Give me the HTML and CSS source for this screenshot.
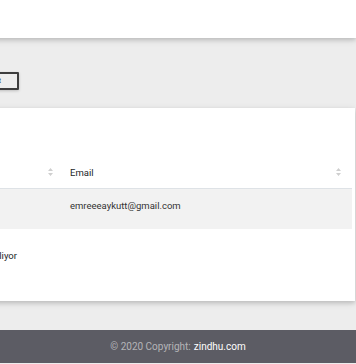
FILE: index.html
```html
<!DOCTYPE html>
<html lang="tr">
<head>
  <meta charset="UTF-8" />
  <meta name="viewport" content="width=device-width, initial-scale=1" />
  <title>Kullanıcılar</title>
  <link rel="stylesheet" href="styles.css">
</head>
<body>
  <div class="page">
    <div class="top-card"></div>

    <div class="toolbar">
      <button class="btn-outline">FİLTRELER</button>
    </div>

    <div class="card">
      <table class="data-table">
        <thead>
          <tr>
            <th class="col-name">Ad Soyad
              <svg class="sort" width="5" height="8" viewBox="0 0 5 8"><path d="M2.5 0L5 3H0z M2.5 8L0 5h5z" fill="#cfcfcf"/></svg>
            </th>
            <th class="col-mail">Email
              <svg class="sort" width="5" height="8" viewBox="0 0 5 8"><path d="M2.5 0L5 3H0z M2.5 8L0 5h5z" fill="#cfcfcf"/></svg>
            </th>
          </tr>
        </thead>
        <tbody>
          <tr class="striped">
            <td>Emre Aykut</td>
            <td>emreeeaykutt@gmail.com</td>
          </tr>
        </tbody>
      </table>
      <div class="info">1 kayıttan 1 - 1 arası gösteriliyor</div>
    </div>

    <div class="gap"></div>
  </div>

  <footer class="footer">
    © 2020 Copyright: <a href="#">zindhu.com</a>
  </footer>
</body>
</html>
```

FILE: styles.css
```css
body {
  margin: 0;
  background: #ededed;
  font-family: Roboto, "Liberation Sans", sans-serif;
  color: #212529;
  overflow: hidden;
}
.page {
  margin-left: -200px;
  width: 556px;
}
.top-card {
  height: 38px;
  background: #fff;
  box-shadow: 0 2px 4px 0 rgba(0,0,0,.14), 0 2px 8px 0 rgba(0,0,0,.1);
}
.toolbar {
  height: 70px;
  width: 219px;
  display: flex;
  justify-content: flex-end;
  align-items: flex-start;
  padding-top: 34px;
  box-sizing: border-box;
}
.btn-outline {
  height: 18px;
  padding: 0 16px 0 10px;
  border: 2px solid #3d3d3d;
  border-radius: 1px;
  background: transparent;
  color: #555;
  font-family: Roboto, sans-serif;
  font-size: 7px;
  font-weight: 700;
  box-shadow: 0 1px 3px rgba(0,0,0,.2);
}
.card {
  width: 555px;
  height: 193px;
  background: #fff;
  box-shadow: 0 2px 4px 0 rgba(0,0,0,.14), 0 2px 8px 0 rgba(0,0,0,.1);
  padding-top: 45px;
  box-sizing: border-box;
}
.data-table {
  width: 552px;
  border-collapse: collapse;
  table-layout: fixed;
  font-size: 9.5px;
}
.col-name {
  width: 258px;
}
.data-table th {
  position: relative;
  text-align: left;
  font-weight: 400;
  height: 35px;
  padding: 4px 12px 0;
  box-sizing: border-box;
  border-bottom: 1px solid #dee2e6;
}
.data-table td {
  height: 41px;
  padding: 0 12px 6px;
  box-sizing: border-box;
  color: #333;
}
.sort {
  position: absolute;
  right: 5px;
  top: 15px;
}
.col-mail .sort {
  right: 11px;
}
.striped {
  background: #f2f2f2;
}
.info {
  width: 217px;
  text-align: right;
  font-size: 9.5px;
  margin-top: 21px;
}
.gap {
  height: 29px;
}
.footer {
  height: 33px;
  background: #5c5c64;
  color: rgba(255,255,255,.55);
  font-size: 10px;
  display: flex;
  align-items: center;
  justify-content: center;
  padding-bottom: 1px;
  box-sizing: border-box;
}
.footer a {
  color: #fff;
  text-decoration: none;
  margin-left: 3px;
}
```
